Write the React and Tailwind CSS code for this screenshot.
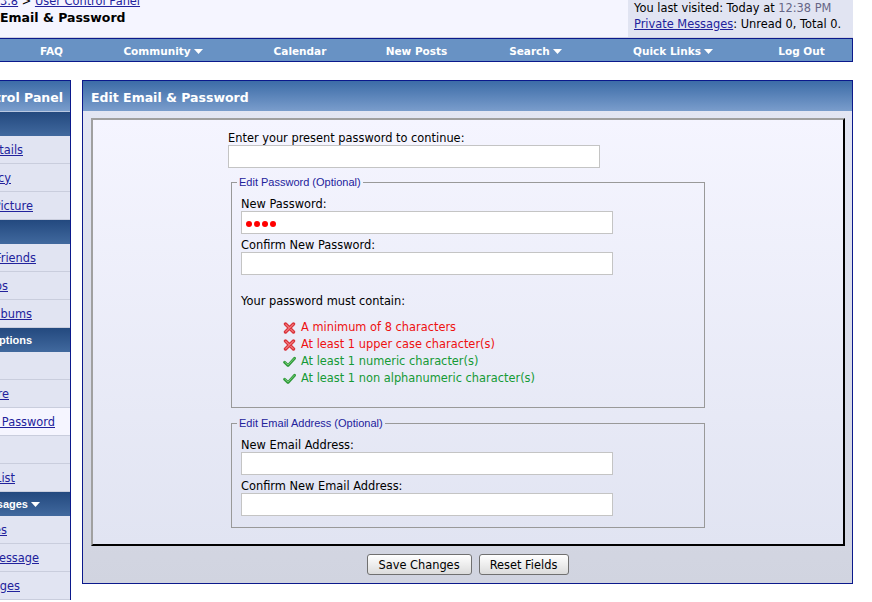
import React from "react";

function Tri() {
  return (
    <svg width="9" height="5" viewBox="0 0 9 5" className="ml-[3px] shrink-0">
      <path d="M0 0 H9 L4.5 5 Z" fill="#ffffff" />
    </svg>
  );
}

function XIcon() {
  return (
    <svg width="13" height="12" viewBox="0 0 13 12" className="shrink-0">
      <path d="M2.5 2 L10.5 10 M10.5 2 L2.5 10" stroke="#d8323a" strokeWidth="3.4" strokeLinecap="round" fill="none" />
      <path d="M2.8 2.3 L10.2 9.7 M10.2 2.3 L2.8 9.7" stroke="#f47a7e" strokeWidth="1.2" strokeLinecap="round" fill="none" />
    </svg>
  );
}

function CheckIcon() {
  return (
    <svg width="13" height="12" viewBox="0 0 13 12" className="shrink-0">
      <path d="M1.6 6.2 L5 9.6 L11.6 2.2" stroke="#2f9a3a" strokeWidth="2.8" strokeLinecap="round" strokeLinejoin="round" fill="none" />
      <path d="M2 6.2 L5 9 L11.2 2.4" stroke="#7ccf7c" strokeWidth="0.9" strokeLinecap="round" strokeLinejoin="round" fill="none" />
    </svg>
  );
}

function SideRow({ text, pr, hl, hide }) {
  return (
    <div
      className={
        "flex h-[28px] items-center justify-end overflow-hidden border-b border-[#c9cddd] leading-[14px] " +
        pr +
        (hl ? " bg-[#f5f5ff]" : " bg-[#e1e4f2]")
      }
    >
      <a className={"shrink-0 whitespace-nowrap text-[#22229c] underline" + (hide ? " mr-[40px]" : "")}>{text}</a>
    </div>
  );
}

function SideCat({ text, pr, tri, hide }) {
  return (
    <div
      className={
        "flex h-[24px] items-center justify-end overflow-hidden bg-linear-to-b from-[#23497f] to-[#41699e] font-['Liberation_Sans',sans-serif] text-[11px] font-bold leading-[14px] text-white " +
        pr
      }
    >
      <span className={"flex shrink-0 items-center whitespace-nowrap" + (hide ? " mr-[40px]" : "")}>
        {text}
        {tri ? <Tri /> : null}
      </span>
    </div>
  );
}

function Field({ className = "", children }) {
  return (
    <div className={"h-[23px] w-[372px] border border-[#c4c4c4] bg-white " + className}>{children}</div>
  );
}

const checks = [
  { ok: false, t: "A minimum of 8 characters" },
  { ok: false, t: "At least 1 upper case character(s)" },
  { ok: true, t: "At least 1 numeric character(s)" },
  { ok: true, t: "At least 1 non alphanumeric character(s)" },
];

export default function App() {
  return (
    <div className="h-[602px] w-[872px] overflow-hidden bg-white font-['DejaVu_Sans',sans-serif] text-[11.4px] text-black">
      {/* top header */}
      <div className="flex h-[38px] w-[853px] border-b border-[#d1d1e1] bg-[#f5f5ff]">
        <div className="flex-1 overflow-hidden">
          <div className="mt-[-6px] flex h-[14px] items-start whitespace-pre leading-[14px]">
            <a className="text-[#22229c] underline">3.8</a>
            <span> &gt; </span>
            <a className="text-[#22229c] underline">User Control Panel</a>
          </div>
          <div className="mt-[2px] flex text-[12.5px] font-bold leading-[16px]">
            <span className="flex w-0 justify-end">
              <span className="shrink-0 whitespace-pre">Edit </span>
            </span>
            <span className="whitespace-nowrap">Email &amp; Password</span>
          </div>
        </div>
        <div className="w-[225px] bg-[#e1e4f2] pl-[6px] leading-[16px] whitespace-nowrap">
          <div>
            You last visited: Today at <span className="text-[#666686]">12:38 PM</span>
          </div>
          <div>
            <a className="text-[#22229c] underline">Private Messages</a>: Unread 0, Total 0.
          </div>
        </div>
      </div>

      {/* navbar */}
      <div className="flex h-[24px] w-[853px] border-y border-r border-[#0b198c] bg-[#6892c4] text-[10.5px] font-bold leading-[14px] text-white">
        <div className="flex w-[103px] shrink-0 items-center justify-center pt-[2px]">FAQ</div>
        <div className="flex w-[120px] shrink-0 items-center justify-center pt-[2px]">
          Community
          <Tri />
        </div>
        <div className="flex w-[154px] shrink-0 items-center justify-center pt-[2px]">Calendar</div>
        <div className="flex w-[79px] shrink-0 items-center justify-center pt-[2px]">New Posts</div>
        <div className="flex w-[159px] shrink-0 items-center justify-center pt-[2px]">
          Search
          <Tri />
        </div>
        <div className="flex w-[116px] shrink-0 items-center justify-center pt-[2px]">
          Quick Links
          <Tri />
        </div>
        <div className="flex flex-1 items-center justify-center pl-[20px] pt-[2px]">Log Out</div>
      </div>

      {/* content */}
      <div className="mt-[18px] flex items-start">
        {/* sidebar */}
        <div className="w-[71px] shrink-0 overflow-hidden border-t border-r border-[#0b198c]">
          <div className="flex h-[31px] justify-end border-b border-[#b9c8e2] bg-linear-to-b from-[#3c6ca7] to-[#7a9dcc] pr-[7px] pt-[9px] text-[12.5px] font-bold leading-[16px] text-white">
            <span className="shrink-0 whitespace-nowrap">Control Panel</span>
          </div>
          <SideCat text="My Account" pr="pr-[60px]" hide />
          <SideRow text="Edit Your Details" pr="pr-[47px]" />
          <SideRow text="Profile Privacy" pr="pr-[59px]" />
          <SideRow text="Edit Profile Picture" pr="pr-[37px]" />
          <SideCat text="Networking" pr="pr-[60px]" hide />
          <SideRow text="Contacts &amp; Friends" pr="pr-[34px]" />
          <SideRow text="Social Groups" pr="pr-[62px]" />
          <SideRow text="Pictures & Albums" pr="pr-[38px]" />
          <SideCat text="Settings & Options" pr="pr-[38px]" />
          <SideRow text="Edit Options" pr="pr-[60px]" hide />
          <SideRow text="Edit Signature" pr="pr-[61px]" />
          <SideRow text="Edit Email & Password" pr="pr-[15px]" hl />
          <SideRow text="Edit Avatar" pr="pr-[60px]" hide />
          <SideRow text="Edit Ignore List" pr="pr-[55px]" />
          <SideCat text="Private Messages" pr="pr-[30px]" tri />
          <SideRow text="List Messages" pr="pr-[63px]" />
          <SideRow text="Send New Message" pr="pr-[31px]" />
          <SideRow text="Track Messages" pr="pr-[50px]" />
        </div>

        {/* main panel */}
        <div className="ml-[11px] w-[771px] shrink-0 border border-[#0b198c]">
          <div className="h-[30px] bg-linear-to-b from-[#3c6ca7] to-[#7a9dcc] pl-[8px] pt-[9px] text-[12.5px] font-bold leading-[16px] text-white">
            Edit Email &amp; Password
          </div>
          <div className="bg-linear-to-b from-[#e3e6f3] to-[#d1d4e0] pl-[8px] pt-[7px]">
            <div className="w-[754px] border-2 border-t-[#a0a0a0] border-l-[#a0a0a0] border-r-black border-b-black bg-linear-to-b from-[#f5f5ff] to-[#e1e4f2] pt-[11px] pb-[16px]">
              <div className="mx-auto w-[480px]">
                <div className="leading-[14px]">Enter your present password to continue:</div>
                <Field />

                <fieldset className="ml-[3px] mt-[7px] w-[474px] border border-[#999999] pb-[20px]">
                  <legend className="ml-[5px] px-[2px] font-['Liberation_Sans',sans-serif] text-[11px] leading-[15px] text-[#22229c]">
                    Edit Password (Optional)
                  </legend>
                  <div className="pl-[9px] pt-[7px]">
                    <div className="leading-[14px]">New Password:</div>
                    <Field className="flex items-center gap-[2px] pl-[4px] pt-[3px]">
                      <span className="h-[6px] w-[6px] rounded-full bg-[#ff0000]" />
                      <span className="h-[6px] w-[6px] rounded-full bg-[#ff0000]" />
                      <span className="h-[6px] w-[6px] rounded-full bg-[#ff0000]" />
                      <span className="h-[6px] w-[6px] rounded-full bg-[#ff0000]" />
                    </Field>
                    <div className="mt-[4px] leading-[14px]">Confirm New Password:</div>
                    <Field />
                    <div className="mt-[19px] leading-[14px]">Your password must contain:</div>
                    <div className="mt-[11px] pl-[42px]">
                      {checks.map((c) => (
                        <div key={c.t} className="flex h-[17px] items-center leading-[17px]">
                          {c.ok ? <CheckIcon /> : <XIcon />}
                          <span className={"ml-[5px] whitespace-nowrap " + (c.ok ? "text-[#159a35]" : "text-[#ee1111]")}>
                            {c.t}
                          </span>
                        </div>
                      ))}
                    </div>
                  </div>
                </fieldset>

                <fieldset className="ml-[3px] mt-[8px] w-[474px] border border-[#999999] pb-[11px]">
                  <legend className="ml-[5px] px-[2px] font-['Liberation_Sans',sans-serif] text-[11px] leading-[15px] text-[#22229c]">
                    Edit Email Address (Optional)
                  </legend>
                  <div className="pl-[9px] pt-[7px]">
                    <div className="leading-[14px]">New Email Address:</div>
                    <Field />
                    <div className="mt-[4px] leading-[14px]">Confirm New Email Address:</div>
                    <Field />
                  </div>
                </fieldset>
              </div>
            </div>
            <div className="flex justify-center gap-[7px] py-[8px] pr-[8px]">
              <button className="h-[21px] w-[105px] rounded-[3px] border border-[#707070] bg-linear-to-b from-white to-[#dcdcdc] leading-[14px] text-black">
                Save Changes
              </button>
              <button className="h-[21px] w-[90px] rounded-[3px] border border-[#707070] bg-linear-to-b from-white to-[#dcdcdc] leading-[14px] text-black">
                Reset Fields
              </button>
            </div>
          </div>
        </div>
      </div>
    </div>
  );
}
